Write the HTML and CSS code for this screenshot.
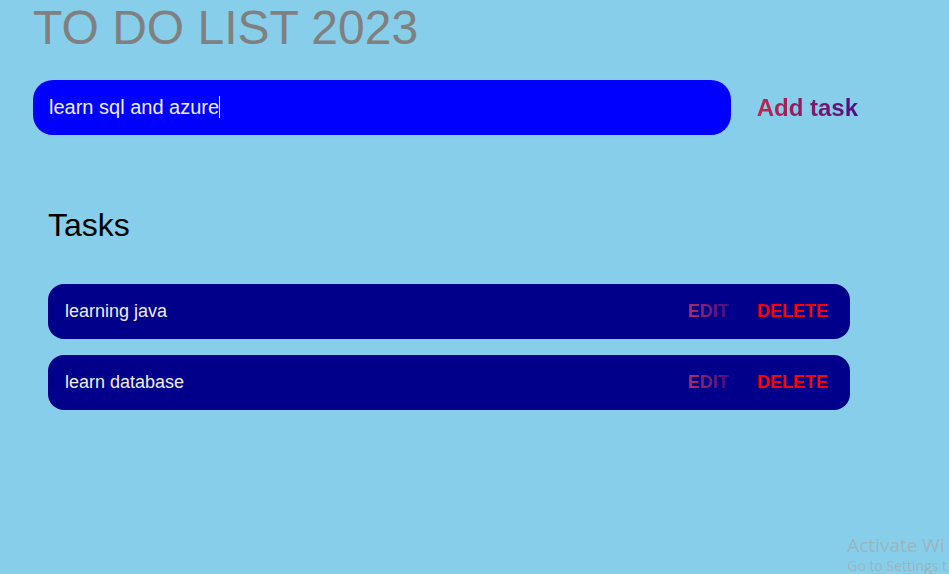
FILE: index.html
```html
<!DOCTYPE html>
<html lang="en">
<head>
<meta charset="utf-8">
<meta name="viewport" content="width=device-width, initial-scale=1">
<title>TO DO LIST 2023</title>
<link rel="stylesheet" href="styles.css">
</head>
<body>
<header>
  <h1>TO DO LIST 2023</h1>
  <form class="new-task">
    <div class="field">
      <input class="new-task-input" type="text" value="learn sql and azure" aria-label="New task" autocomplete="off" spellcheck="false">
      <span class="caret" aria-hidden="true"></span>
    </div>
    <button class="add" type="button">Add task</button>
  </form>
</header>
<main>
  <h2>Tasks</h2>
  <ul class="tasks">
    <li class="task">
      <input class="text" type="text" value="learning java" aria-label="Task 1" readonly>
      <div class="actions">
        <button class="edit" type="button">EDIT</button>
        <button class="delete" type="button">DELETE</button>
      </div>
    </li>
    <li class="task">
      <input class="text" type="text" value="learn database" aria-label="Task 2" readonly>
      <div class="actions">
        <button class="edit" type="button">EDIT</button>
        <button class="delete" type="button">DELETE</button>
      </div>
    </li>
  </ul>
</main>
<aside class="watermark">
  <p class="watermark-title">Activate Wi</p>
  <p class="watermark-note">Go to Settings t</p>
</aside>
</body>
</html>
```
FILE: styles.css
```css
* {
  box-sizing: border-box;
  margin: 0;
  padding: 0;
}

body {
  min-height: 100vh;
  background: skyblue;
  font-family: Arial, "Liberation Sans", sans-serif;
}

button,
input {
  border: none;
  outline: none;
  background: none;
  font-family: inherit;
}

button {
  cursor: pointer;
  font-weight: 700;
}

header {
  padding: 0 91px 0 33px;
}

h1 {
  margin-bottom: 24px;
  color: gray;
  font-size: 48px;
  font-weight: 400;
  line-height: 56px;
}

.new-task {
  display: flex;
  gap: 26px;
}

.field {
  position: relative;
  flex: 1;
  display: flex;
}

.new-task-input {
  flex: 1;
  min-width: 0;
  height: 55px;
  padding: 0 16px;
  border-radius: 20px;
  background: blue;
  color: #eee;
  font-size: 20px;
}

.caret {
  position: absolute;
  top: 16px;
  left: 186px;
  width: 1px;
  height: 22px;
  background: #eee;
}

.add,
.edit {
  background-image: linear-gradient(to right, #c0274c, #4b1080);
  background-clip: text;
  -webkit-background-clip: text;
  color: transparent;
}

.add {
  font-size: 24px;
}

main {
  padding: 72px 99px 0 48px;
}

h2 {
  margin-bottom: 41px;
  font-size: 32px;
  font-weight: 400;
  line-height: 36px;
}

.tasks {
  display: grid;
  gap: 16px;
  list-style: none;
}

.task {
  display: flex;
  align-items: center;
  height: 55px;
  padding: 0 22px 0 17px;
  border-radius: 16px;
  background: darkblue;
}

.text {
  flex: 1;
  min-width: 0;
  color: #eee;
  font-size: 18px;
}

.actions {
  display: flex;
  gap: 28px;
}

.edit,
.delete {
  font-size: 18px;
}

.edit {
  background-image: linear-gradient(to right, #b52c60, #480c80);
}

.delete {
  color: red;
}

.watermark {
  position: fixed;
  right: 0;
  bottom: 0;
  width: 102px;
  color: #9ab4bf;
  font-family: "Segoe UI", "Open Sans", sans-serif;
  white-space: nowrap;
}

.watermark-title {
  font-size: 19px;
  line-height: 26px;
}

.watermark-note {
  font-size: 14px;
  line-height: 16px;
}
```
